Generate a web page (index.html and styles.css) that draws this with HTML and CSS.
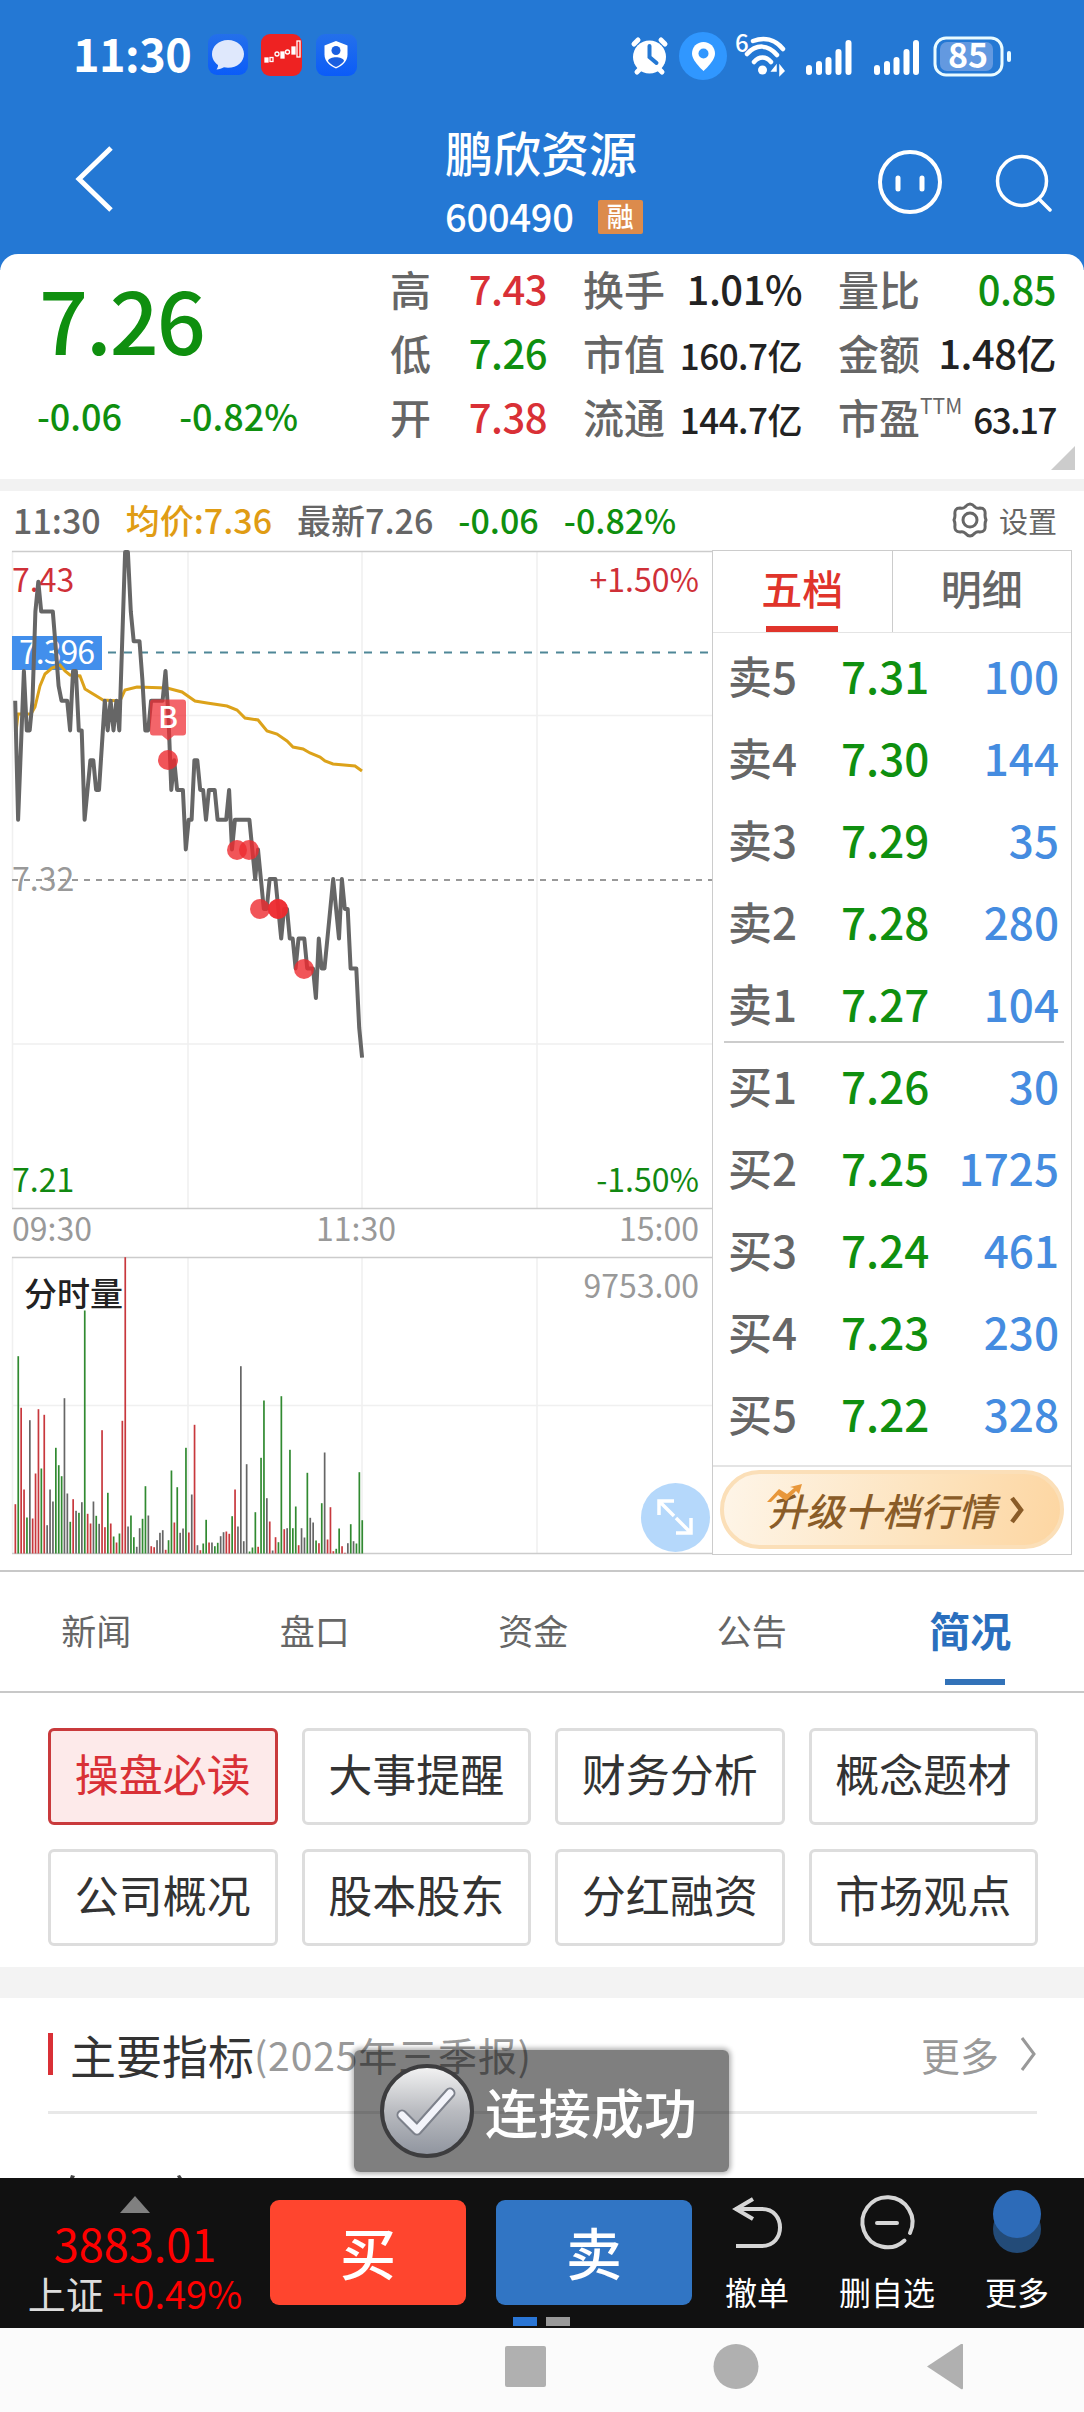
FILE: index.html
```html
<!DOCTYPE html>
<html lang="zh-CN">
<head>
    <meta charset="UTF-8">
    <meta name="viewport" content="width=device-width, initial-scale=1.0">
    <title>鹏欣资源 600490</title>
    <link rel="stylesheet" href="styles.css">
</head>
<body>
    <header>
        <div class="status-bar">
            <span class="clock">11:30</span>
            <svg class="app-icons" width="152" height="46" viewBox="0 0 152 46">
                <defs>
                    <linearGradient id="app-blue" x1="0" y1="0" x2="0" y2="1">
                        <stop offset="0" stop-color="#2470ea"/>
                        <stop offset="1" stop-color="#0b5cf8"/>
                    </linearGradient>
                </defs>
                <rect x="0" y="2" width="40" height="41" rx="9" fill="url(#app-blue)"/>
                <path d="M20 8C10.500 8 4 14.500 4 22c0 4.500 2.300 8.500 6 11 0 2-.6 3.400-1.500 4.500 2.800-.2 5.400-1 7.500-2.200 1.300.3 2.600.5 4 .5 9.500 0 16-6.300 16-13.800S29.500 8 20 8z" fill="#dfe8fc"/>
                <rect x="53" y="2" width="41" height="42" rx="9" fill="#ee2222"/>
                <g fill="none" stroke="#fff" stroke-width="1.300">
                    <rect x="57" y="26" width="3" height="4" fill="#fff"/>
                    <rect x="62" y="25.500" width="3" height="4"/>
                    <circle cx="69" cy="22" r="2"/>
                    <rect x="73" y="20" width="3" height="6" fill="#fff"/>
                    <circle cx="79.500" cy="20" r="2"/>
                    <rect x="84" y="15" width="3" height="7" fill="#fff"/>
                    <rect x="89" y="9" width="3" height="16"/>
                </g>
                <rect x="108" y="2" width="41" height="42" rx="9" fill="url(#app-blue)"/>
                <path d="M128 9l11.500 4.500v9c0 6.500-4.500 11-11.500 14-7-3-11.500-7.500-11.500-14v-9z" fill="#fff"/>
                <circle cx="128" cy="18.500" r="4.500" fill="#1a5fe0"/>
                <path d="M120 29c1-5 15-5 16 0-2 3-5 4.600-8 6-3-1.400-6-3-8-6z" fill="#1a5fe0"/>
            </svg>
            <svg class="system-icons" width="392" height="60" viewBox="0 0 392 60">
                <circle cx="29.500" cy="32" r="16.500" fill="#fff"/>
                <path d="M17 47l3-3M42 47l-3-3M14 19l4-4M45 19l-4-4" stroke="#fff" stroke-width="5" stroke-linecap="round"/>
                <path d="M29.500 21v11l7 6" fill="none" stroke="#2478d4" stroke-width="4" stroke-linecap="round"/>
                <circle cx="83" cy="31" r="24" fill="#3097ff"/>
                <path d="M83.500 17c-6.600 0-11.500 5-11.500 11.500C72 36 83.500 46 83.500 46S95 36 95 28.500C95 22 90 17 83.500 17z" fill="#fff"/>
                <circle cx="83.500" cy="28.500" r="5" fill="#3097ff"/>
                <text x="115" y="27" class="wifi-six">6</text>
                <g fill="none" stroke="#fff" stroke-width="4.500" stroke-linecap="round">
                    <path d="M133 16c11-4 22-2 30 8"/>
                    <path d="M127 29c9-10 21-10 30 1"/>
                    <path d="M134 37c5-6 12-6 17 0"/>
                </g>
                <circle cx="142.500" cy="45" r="4.500" fill="#fff"/>
                <path d="M156 41l-4 5h4zM160 41v9l4-4z" stroke="#fff" stroke-width="1.500" fill="#fff"/>
                <g stroke="#fff" stroke-width="6" stroke-linecap="round">
                    <path d="M189 43v4M199 39v8M208.500 35v12M218.500 27v20M228.500 18v29"/>
                    <path d="M257 43v4M267 39v8M276.500 35v12M286.500 27v20M296 18v29"/>
                </g>
                <rect x="315" y="13" width="67" height="37" rx="11" fill="none" stroke="#e9fbff" stroke-width="3"/>
                <rect x="320" y="17" width="53" height="29" rx="7" fill="#6399e0"/>
                <path d="M389 28v7" stroke="#e9fbff" stroke-width="4" stroke-linecap="round"/>
                <text x="348" y="43" class="battery">85</text>
            </svg>
        </div>
        <div class="title-bar">
            <svg class="back" width="40" height="70" viewBox="0 0 40 70" fill="none" stroke="#fff" stroke-width="5">
                <path d="M36 4L4 35l32 31"/>
            </svg>
            <div class="stock">
                <h1>鹏欣资源</h1>
                <div class="code">600490<span class="badge">融</span></div>
            </div>
            <svg class="tools" width="176" height="70" viewBox="0 0 176 70" fill="none" stroke="#fff" stroke-linecap="round">
                <circle cx="34" cy="35" r="30" stroke-width="4"/>
                <path d="M22 31v11M46 31v11" stroke-width="5"/>
                <circle cx="146" cy="34" r="24.500" stroke-width="3.500"/>
                <path d="M163 52l11 11" stroke-width="3.500"/>
            </svg>
        </div>
    </header>

    <section class="quote">
        <div class="last">
            <div class="last-price green">7.26</div>
            <div class="last-change green"><span>-0.06</span><span>-0.82%</span></div>
        </div>
        <div class="stats">
            <div class="stat"><span>高</span><b class="red">7.43</b></div>
            <div class="stat"><span>换手</span><b>1.01%</b></div>
            <div class="stat"><span>量比</span><b class="green">0.85</b></div>
            <div class="stat"><span>低</span><b class="green">7.26</b></div>
            <div class="stat"><span>市值</span><b class="small">160.7亿</b></div>
            <div class="stat"><span>金额</span><b class="mid">1.48亿</b></div>
            <div class="stat"><span>开</span><b class="red">7.38</b></div>
            <div class="stat"><span>流通</span><b class="small">144.7亿</b></div>
            <div class="stat"><span>市盈<sup>TTM</sup></span><b class="small tight">63.17</b></div>
        </div>
        <i class="corner"></i>
    </section>

    <div class="info-line">
        <span>11:30</span>
        <span class="orange">均价:7.36</span>
        <span>最新7.26</span>
        <span class="green">-0.06</span>
        <span class="green">-0.82%</span>
        <span class="settings">
            <svg width="38" height="38" viewBox="0 0 38 38" fill="none" stroke="#666" stroke-width="3" stroke-linejoin="round">
                <path d="M14 6q5-6 10 0q2 2 5 1q6 0 5 7q0 3 1 5q-1 2-1 5q1 7-5 7q-3-1-5 1q-5 6-10 0q-2-2-5-1q-6 0-5-7q0-3-1-5q1-2 1-5q-1-7 5-7q3 1 5-1z"/>
                <circle cx="19" cy="19" r="7"/>
            </svg>
            设置
        </span>
    </div>

    <main class="market">
        <svg class="chart" width="712" height="1006" viewBox="0 549 712 1006">
            <g stroke="#f0f0f0" stroke-width="1.500">
                <path d="M12.500 551V1208M188 551V1208M362 551V1208M537 551V1208M12 715.500H712M12 1044H712"/>
                <path d="M12.500 1257V1553M188 1257V1553M362 1257V1553M537 1257V1553M12 1405.500H712"/>
            </g>
            <path d="M12 551.500H712M12 1208.500H712M12 1257.500H712M12 1553.500H712" stroke="#ccc" stroke-width="1.500"/>
            <path d="M12 880H712" stroke="#999" stroke-width="1.800" stroke-dasharray="6 6"/>
            <path d="M108 652.500H712" stroke="#4f8797" stroke-width="2" stroke-dasharray="8 8"/>
            <rect x="12" y="636" width="90" height="34" fill="#428fec"/>
            <g class="axis">
                <text x="12" y="592" fill="#cf3038">7.43</text>
                <text x="19" y="664" fill="#fff" textLength="76">7.396</text>
                <text x="12" y="891" fill="#999">7.32</text>
                <text x="12" y="1192" fill="#118811">7.21</text>
                <text x="699" y="592" fill="#cf3038" text-anchor="end">+1.50%</text>
                <text x="699" y="1192" fill="#118811" text-anchor="end">-1.50%</text>
                <text x="12" y="1241" fill="#999">09:30</text>
                <text x="356" y="1241" fill="#999" text-anchor="middle">11:30</text>
                <text x="699" y="1241" fill="#999" text-anchor="end">15:00</text>
                <text x="699" y="1298" fill="#999" text-anchor="end">9753.00</text>
            </g>
            <path d="M16 732L18 714H31L35 707L40 686L45 674L52 668L60 665L65 671L70 675L80 676L85 689L103 700L120 701L125 690L137 687L167 688L182 692L195 701L207 703L227 706L237 710L245 718L258 720L267 731L277 734L287 741L293 747L303 749L310 753L320 757L325 761L333 764L355 766L362 771" fill="none" stroke="#dca21a" stroke-width="3"/>
            <polyline id="price-line" fill="none" stroke="#666" stroke-width="4" stroke-linejoin="round"/>
            <g fill="#ee2a30" fill-opacity=".8">
                <path d="M153 699.500h30a3 3 0 013 3v30a3 3 0 01-3 3h-9l-6 5-6-5h-9a3 3 0 01-3-3v-30a3 3 0 013-3z" fill-opacity=".72"/>
                <circle cx="168" cy="760" r="10"/>
                <circle cx="237" cy="850" r="10"/>
                <circle cx="249" cy="850" r="10"/>
                <circle cx="260" cy="909" r="10"/>
                <circle cx="278" cy="909" r="10"/>
                <circle cx="278" cy="909" r="10"/>
                <circle cx="304" cy="969" r="10"/>
            </g>
            <text x="168" y="728" class="mark">B</text>
            <g id="volume"></g>
            <text x="24" y="1306" class="volume-title">分时量</text>
            <circle cx="675.500" cy="1517.500" r="34.500" fill="#b5d8fb"/>
            <path d="M674 1516L659 1501M674 1501H659V1515M676 1518L691 1533M676 1533H691V1518" fill="none" stroke="#fff" stroke-width="3.500"/>
        </svg>
        <div class="book">
            <div class="book-tabs">
                <span class="book-tab active">五档</span>
                <span class="book-tab">明细</span>
            </div>
            <div class="levels asks">
                <div class="level"><span>卖5</span><b>7.31</b><i>100</i></div>
                <div class="level"><span>卖4</span><b>7.30</b><i>144</i></div>
                <div class="level"><span>卖3</span><b>7.29</b><i>35</i></div>
                <div class="level"><span>卖2</span><b>7.28</b><i>280</i></div>
                <div class="level"><span>卖1</span><b>7.27</b><i>104</i></div>
            </div>
            <div class="levels">
                <div class="level"><span>买1</span><b>7.26</b><i>30</i></div>
                <div class="level"><span>买2</span><b>7.25</b><i>1725</i></div>
                <div class="level"><span>买3</span><b>7.24</b><i>461</i></div>
                <div class="level"><span>买4</span><b>7.23</b><i>230</i></div>
                <div class="level"><span>买5</span><b>7.22</b><i>328</i></div>
            </div>
            <div class="upgrade">
                <div class="upgrade-btn">
                    <em>升级十档行情</em>
                    <svg width="16" height="28" viewBox="0 0 16 28" fill="none" stroke="#8a5c28" stroke-width="4.500">
                        <path d="M3 2l9 12-9 12"/>
                    </svg>
                    <svg class="spark" width="38" height="20" viewBox="0 0 38 20">
                        <path d="M1 19L13 6l8 5 7-6-4-1 12-3-3 10-3-3-10 10-8-6-7 7z" fill="#e8973a"/>
                    </svg>
                </div>
            </div>
        </div>
    </main>

    <nav>
        <a>新闻</a>
        <a>盘口</a>
        <a>资金</a>
        <a>公告</a>
        <a class="active">简况</a>
    </nav>

    <section class="topics">
        <a class="active">操盘必读</a>
        <a>大事提醒</a>
        <a>财务分析</a>
        <a>概念题材</a>
        <a>公司概况</a>
        <a>股本股东</a>
        <a>分红融资</a>
        <a>市场观点</a>
    </section>

    <section class="metrics">
        <div class="metrics-head">
            <h2>主要指标</h2>
            <span class="period">(2025年三季报)</span>
            <span class="more">更多</span>
            <svg width="18" height="36" viewBox="0 0 18 36" fill="none" stroke="#999" stroke-width="3">
                <path d="M3 2l12 16L3 34"/>
            </svg>
        </div>
        <svg class="next-row" width="140" height="4" viewBox="0 0 140 4" fill="#444">
            <path d="M22 4l1-3 4 1-1 2zM134 4l-2-3-3 1 1 2z"/>
        </svg>
    </section>

    <div class="trade-bar">
        <div class="index">
            <i class="up"></i>
            <div class="index-value">3883.01</div>
            <div class="index-change">上证 <span>+0.49%</span></div>
        </div>
        <a class="trade buy">买</a>
        <a class="trade sell">卖</a>
        <div class="action cancel">
            <svg width="56" height="60" viewBox="0 0 56 60" fill="none" stroke="#d6d6d6" stroke-width="4">
                <path d="M7 51h26c24 0 24-37 0-37H6M24 4L7 14l17 10"/>
            </svg>
            撤单
        </div>
        <div class="action remove">
            <svg width="56" height="60" viewBox="0 0 56 60" fill="none" stroke="#d6d6d6" stroke-width="4" stroke-linecap="round">
                <path d="M51 38A25 25 0 1 0 45.500 45.500M18 28h20"/>
            </svg>
            删自选
        </div>
        <div class="action others">
            <svg width="56" height="60" viewBox="0 0 56 60">
                <circle cx="28" cy="34" r="24" fill="#234b78"/>
                <circle cx="28" cy="19" r="24" fill="#2d6bb8"/>
            </svg>
            更多
        </div>
        <div class="dots"><i class="on"></i><i></i></div>
    </div>

    <div class="system-nav">
        <svg width="460" height="48" viewBox="0 0 460 48" fill="#b0b0b0">
            <rect x="1" y="2" width="41" height="41" rx="2"/>
            <circle cx="232" cy="22.500" r="22.500"/>
            <path d="M423 22.500L457 0q2-1 2 1v43q0 2-2 1z"/>
        </svg>
    </div>

    <div class="toast">
        <svg width="96" height="98" viewBox="0 0 96 98">
            <defs>
                <linearGradient id="ball" x1="0" y1="0" x2="0" y2="1">
                    <stop offset="0" stop-color="#f4f4f4"/>
                    <stop offset=".5" stop-color="#b9bbc0"/>
                    <stop offset="1" stop-color="#8f949e"/>
                </linearGradient>
            </defs>
            <circle cx="48" cy="49" r="45" fill="url(#ball)" stroke="#3d3d3f" stroke-width="4"/>
            <path d="M23 53l15 15 33-37" fill="none" stroke="#7d818b" stroke-width="11" stroke-linecap="round" stroke-linejoin="round"/>
            <path d="M23 53l15 15 33-37" fill="none" stroke="#f3f4fa" stroke-width="7" stroke-linecap="round" stroke-linejoin="round"/>
        </svg>
        连接成功
    </div>
    <script src="chart.js"></script>
</body>
</html>
```
FILE: styles.css
```css
* {
    box-sizing: border-box;
}
body {
    margin: 0;
    width: 1084px;
    height: 2412px;
    overflow: hidden;
    position: relative;
    background-color: #fff;
    color: #222;
    font-family: "Noto Sans CJK SC", "Noto Sans", sans-serif;
}
svg {
    display: block;
    flex: none;
}
i, b {
    font-style: normal;
    font-weight: 500;
}
.red { color: #d93036 !important; }
.green { color: #0f8f0f !important; }
.orange { color: #e09c14; }

header {
    height: 270px;
    background-color: #2478d4;
    color: #fff;
}
.status-bar {
    display: flex;
    align-items: flex-start;
    height: 105px;
    padding: 0 0 0 73px;
}
.clock {
    width: 135px;
    font-size: 45px;
    font-weight: 700;
    line-height: 105px;
    letter-spacing: -0.5px;
}
.app-icons {
    margin-top: 32px;
}
.system-icons {
    margin: 25px 0 0 260px;
}
.wifi-six {
    font-size: 24px;
    font-weight: 500;
    fill: #fff;
}
.battery {
    font-size: 34px;
    font-weight: 700;
    fill: #fff;
    text-anchor: middle;
}
.title-bar {
    display: flex;
    padding-left: 75px;
}
.back {
    margin-top: 39px;
}
.stock {
    width: 220px;
    margin: 12px 0 0 330px;
}
h1 {
    margin: 0;
    font-size: 48px;
    font-weight: 500;
    line-height: 68px;
}
.code {
    display: flex;
    align-items: center;
    height: 60px;
    padding-top: 2px;
    font-size: 38px;
    font-weight: 500;
    line-height: 60px;
    letter-spacing: -0.2px;
}
.badge {
    width: 45px;
    height: 34px;
    margin: 2px 0 0 24px;
    background-color: #dc8b4c;
    border-radius: 2px;
    font-size: 27px;
    line-height: 31px;
    text-align: center;
}
.tools {
    margin: 42px 0 0 211px;
}

.quote {
    display: flex;
    position: relative;
    height: 237px;
    margin-top: -16px;
    padding: 3px 27px 0 36px;
    background-color: #fff;
    border-bottom: 12px solid #f2f2f2;
    border-radius: 18px 18px 0 0;
}
.last {
    width: 354px;
}
.last-price {
    height: 133px;
    padding-left: 3px;
    font-size: 86px;
    font-weight: 500;
    line-height: 122px;
    letter-spacing: -2px;
}
.last-change {
    display: flex;
    gap: 57px;
    padding-left: 1px;
    font-size: 36px;
    font-weight: 500;
    line-height: 50px;
}
.stats {
    display: grid;
    grid-template-columns: 157px 219px 218px;
    column-gap: 36px;
    grid-auto-rows: 64px;
}
.stat {
    display: flex;
    justify-content: space-between;
    font-size: 41px;
    line-height: 63px;
    white-space: nowrap;
}
.stat span {
    color: #666;
    font-weight: 500;
}
.stat b {
    font-size: 40px;
    letter-spacing: -0.5px;
}
.stat .small {
    font-size: 35px;
    line-height: 67px;
}
.stat .tight {
    letter-spacing: -1.5px;
}
.stat .mid {
    font-size: 40px;
}
.stat sup {
    font-size: 21px;
    font-weight: 400;
    line-height: 0;
    vertical-align: 20px;
}
.corner {
    position: absolute;
    right: 9px;
    bottom: 9px;
    border-left: 24px solid transparent;
    border-bottom: 24px solid #ccc;
}

.info-line {
    display: flex;
    height: 58px;
    padding: 0 27px 0 13px;
    color: #666;
    font-size: 34px;
    font-weight: 500;
    line-height: 57px;
    gap: 25px;
    white-space: nowrap;
}
.settings {
    display: flex;
    align-items: center;
    margin-left: auto;
    gap: 10px;
    font-size: 29px;
    font-weight: 400;
}

.market {
    display: flex;
    height: 1023px;
    border-bottom: 2px solid #c8c8c8;
}
.axis {
    font-size: 32px;
}
.mark {
    font-size: 30px;
    font-weight: 500;
    fill: #fff;
    text-anchor: middle;
}
.volume-title {
    font-size: 33px;
    font-weight: 500;
    fill: #222;
}
.book {
    width: 360px;
    height: 1005px;
    margin-top: 1px;
    border: 1.5px solid #ccc;
}
.book-tabs {
    display: flex;
    height: 82px;
    border-bottom: 1px solid #e4e4e4;
}
.book-tab {
    flex: 1;
    color: #666;
    font-size: 41px;
    font-weight: 500;
    line-height: 73px;
    text-align: center;
}
.book-tab.active {
    color: #e0342b;
    border-right: 1.5px solid #ccc;
}
.book-tab.active::after {
    content: "";
    display: block;
    width: 72px;
    height: 6px;
    margin: 2px auto 0;
    background-color: #e0342b;
}
.levels {
    padding: 0 12px 0 15px;
}
.asks {
    position: relative;
}
.asks::after {
    content: "";
    position: absolute;
    left: 11px;
    right: 7px;
    bottom: 0;
    height: 2px;
    background-color: #ccc;
}
.level {
    display: flex;
    height: 82px;
    font-size: 44px;
    line-height: 85px;
}
.level span {
    width: 113px;
    color: #666;
    font-weight: 500;
}
.level b {
    color: #0f8f0f;
}
.level i {
    margin-left: auto;
    color: #458ce0;
}
.upgrade {
    height: 90px;
    margin-top: 12px;
    padding: 3px 7px 0 7px;
    border-top: 2px solid #e4e4e4;
}
.upgrade-btn {
    display: flex;
    position: relative;
    align-items: center;
    height: 79px;
    padding-left: 44px;
    gap: 13px;
    border: 4px solid #fbdfb8;
    border-radius: 40px;
    background: linear-gradient(100deg, #fef5e8, #fde3bd 60%, #fdd6a2);
    color: #8a5c28;
    font-size: 38px;
    font-weight: 500;
    line-height: 66px;
}
.spark {
    position: absolute;
    left: 42px;
    top: 9px;
}

nav {
    display: flex;
    height: 121px;
    margin-left: -13px;
    border-bottom: 2px solid #c8c8c8;
}
nav a {
    flex: none;
    width: 218.5px;
    color: #666;
    font-size: 35px;
    line-height: 115px;
    text-align: center;
}
nav .active {
    color: #2a6fbe;
    font-size: 41px;
    font-weight: 700;
}
nav .active::after {
    content: "";
    display: block;
    width: 60px;
    height: 6px;
    margin: -8px auto 0;
    background-color: #3272b8;
    transform: translateX(5px);
}

.topics {
    display: grid;
    grid-template-columns: repeat(4, 1fr);
    gap: 24px;
    height: 305px;
    padding: 35px 46px 19px 48px;
    border-bottom: 31px solid #f3f3f3;
    align-content: start;
}
.topics a {
    height: 97px;
    border: 3px solid #ddd;
    border-radius: 6px;
    color: #333;
    font-size: 44px;
    line-height: 84px;
    text-align: center;
}
.topics .active {
    border-color: #c93a3c;
    background-color: #fdeaea;
    color: #d93036;
}

.metrics {
    height: 180px;
    padding: 0 47px 0 48px;
}
.metrics-head {
    display: flex;
    align-items: center;
    height: 116px;
    padding-bottom: 2px;
    border-bottom: 3px solid #e8e8e8;
    color: #999;
    font-size: 38px;
}
h2 {
    margin: 0;
    padding-left: 17px;
    border-left: 5px solid #d93036;
    color: #333;
    font-size: 46px;
    font-weight: 400;
    line-height: 42px;
}
.period {
    font-size: 39px;
    letter-spacing: 0.9px;
}
.more {
    margin: 0 20px 0 auto;
    font-size: 39px;
}
.next-row {
    margin-top: 60px;
}

.trade-bar {
    display: flex;
    position: relative;
    height: 150px;
    background-color: #111;
    color: #fff;
}
.index {
    width: 270px;
    padding-top: 18px;
    text-align: center;
}
.up {
    display: block;
    width: 0;
    margin: 0 auto;
    border: 15px solid transparent;
    border-top: 0;
    border-bottom: 17px solid #808080;
}
.index-value {
    height: 56px;
    color: #f00;
    font-size: 45px;
    line-height: 60px;
}
.index-change {
    color: #ddd;
    font-size: 38px;
    line-height: 48px;
    white-space: nowrap;
}
.index-change span {
    color: #f00;
}
.trade {
    width: 196px;
    height: 105px;
    margin: 22px 30px 0 0;
    border-radius: 9px;
    font-size: 56px;
    font-weight: 500;
    line-height: 102px;
    text-align: center;
}
.buy {
    background-color: #ff452e;
}
.sell {
    background-color: #3175c4;
}
.action {
    display: flex;
    flex-direction: column;
    align-items: center;
    padding-top: 17px;
    font-size: 32px;
    line-height: 71px;
}
.cancel {
    width: 70px;
}
.remove {
    width: 190px;
}
.others {
    width: 70px;
}
.action svg {
    overflow: visible;
    margin-bottom: 1px;
}
.others {
    margin-left: 0;
}
.dots {
    display: flex;
    position: absolute;
    left: 513px;
    bottom: 2px;
    gap: 9px;
}
.dots i {
    width: 24px;
    height: 9px;
    background-color: #999;
}
.dots .on {
    background-color: #2a76d6;
}

.system-nav {
    height: 84px;
    padding: 16px 0 0 504px;
    background-color: #fbfbfb;
}

.toast {
    display: flex;
    position: absolute;
    left: 354px;
    top: 2050px;
    align-items: center;
    width: 375px;
    height: 122px;
    padding-left: 25px;
    gap: 10px;
    border-radius: 6px;
    background-color: rgba(0, 0, 0, 0.5);
    box-shadow: 0 0 5px 2px rgba(0, 0, 0, 0.3);
    color: #fff;
    font-size: 53px;
    font-weight: 500;
    line-height: 70px;
    white-space: nowrap;
}
```
FILE: chart.js
```javascript
const SVG_NS = "http://www.w3.org/2000/svg";
const FIRST_X = 15.2;
const STEP = 2.891;

// ticks (0.01) below the 7.43 high, one per minute from 09:30 to 11:30
const ticks = [
    5, 9, 6.5, 4, 6, 6, 5, 2, 1, 2, 2, 2, 2, 2, 3.2, 4.5, 5, 5, 5, 6,
    4, 4, 6, 6, 9, 8, 7, 7, 8, 8, 6.5, 5, 6, 5, 6, 5, 6, 3, 0, 0,
    2, 3, 3, 3, 4.3, 6, 6, 5, 5, 5, 5, 5, 4, 5.5, 8, 7, 8, 8, 8, 10,
    9, 9, 7, 7, 8, 8, 9, 8, 8, 8, 9, 9, 9, 9, 8, 10, 9, 9, 9, 9,
    9, 9, 10, 11, 10, 11, 12, 12, 11, 11, 11, 12, 13, 12, 12, 13, 13, 14, 13, 13,
    13, 14, 14, 14, 15, 13, 14, 14, 13, 12, 11, 12, 13, 11, 12, 12, 14, 14, 14, 16,
    17
];

const points = ticks.map((t, i) => `${(FIRST_X + i * STEP).toFixed(1)},${(552 + t * 29.74).toFixed(1)}`);
document.getElementById("price-line").setAttribute("points", points.join(" "));

// bar heights, r = up, g = down, k = flat
const volume = `r148 g592 r437 r192 g108 k400 r105 r240 r433 g255 r416 k85 k192 k156 g317 g265 g232 k466 k180 g95
r163 k128 g122 k154 g729 r119 r90 k156 g113 k89 r370 r79 g182 r90 g51 r33 g60 r398 r889 k81
g114 g49 k20 k76 g104 g202 k114 r22 r19 k40 k62 k70 r11 g40 g249 r93 g199 k62 k75 g317
r63 k177 r386 k25 r10 g30 g101 r33 k33 g22 g32 k52 k64 r66 r59 g112 r192 k81 k562 k37
k268 g6 g18 g124 r20 g287 g459 k166 r96 k9 r49 g34 g472 r73 k76 g311 g76 g141 r25 k76
k48 g242 k107 k93 g39 r31 g151 k303 r42 r139 r7 g14 g75 r22 r2 k31 g88 k37 g30 g244
g100`.split(/\s+/);
const colors = { r: "#c8383d", g: "#318a31", k: "#666" };

volume.forEach((v, i) => {
    const h = v.slice(1) / 3;
    const bar = document.createElementNS(SVG_NS, "rect");
    bar.setAttribute("x", (FIRST_X + i * STEP - 0.7).toFixed(1));
    bar.setAttribute("y", (1553.5 - h).toFixed(1));
    bar.setAttribute("width", 1.7);
    bar.setAttribute("height", h.toFixed(1));
    bar.setAttribute("fill", colors[v[0]]);
    document.getElementById("volume").appendChild(bar);
});
```
